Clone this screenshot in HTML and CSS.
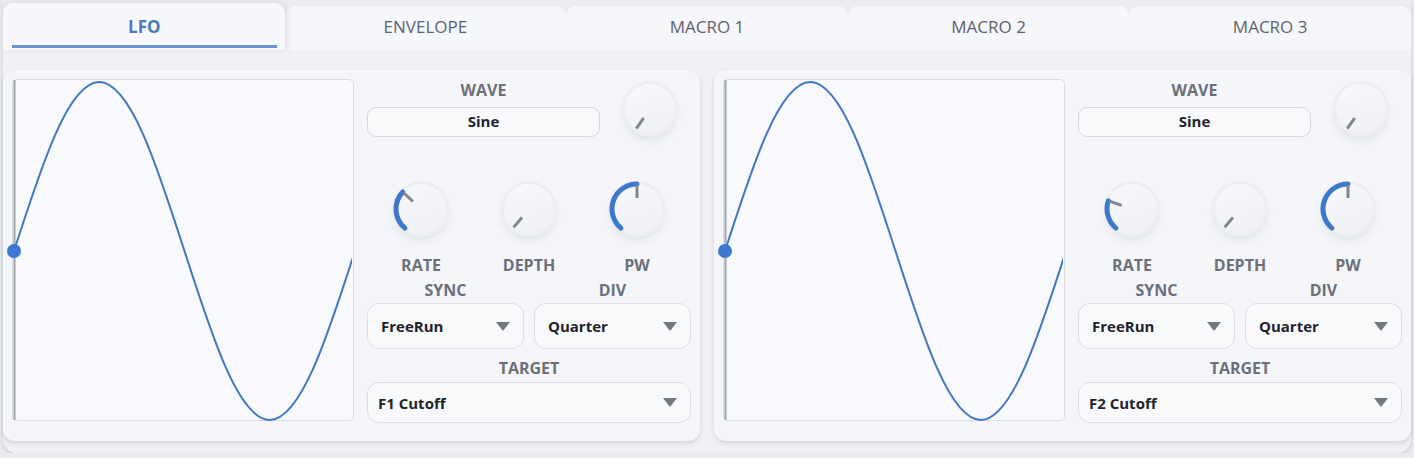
FILE: index.html
```html
<!DOCTYPE html>
<html lang="en">
<head>
    <meta charset="UTF-8">
    <title>Modulation</title>
    <link rel="stylesheet" href="styles.css">
</head>
<body>
    <div class="app">
        <div class="tabs">
            <div class="tab active"><span>LFO</span></div>
            <div class="tab">ENVELOPE</div>
            <div class="tab">MACRO 1</div>
            <div class="tab">MACRO 2</div>
            <div class="tab">MACRO 3</div>
        </div>
        <div class="main">
            <!-- LFO 1 -->
            <div class="panel">
                <div class="scope">
                    <svg viewBox="0 0 340 340" width="340" height="340">
                        <clipPath id="clip1"><rect x="0" y="-4" width="339" height="348"/></clipPath>
                        <line x1="1.5" y1="0" x2="1.5" y2="340" stroke="#a0a4ac" stroke-width="2"/>
                        <path clip-path="url(#clip1)" d="M1 171 C28.8 84.42 55.4 2 86.25 2 C117.1 2 143.7 84.42 171.5 171 C199.3 257.58 225.9 340 256.75 340 C287.6 340 314.2 257.58 342 171" fill="none" stroke="#4176c2" stroke-width="2"/>
                        <circle cx="1" cy="171" r="7" fill="#3c78d2"/>
                    </svg>
                </div>
                <div class="controls">
                    <div class="wave-row">
                        <div class="wave">
                            <div class="label">WAVE</div>
                            <div class="wave-box">Sine</div>
                        </div>
                        <div class="top-knob">
                            <div class="knob">
                                <svg viewBox="0 0 64 64"><path class="ptr" d="M25.69 41.01 L18.23 51.66"/></svg>
                            </div>
                        </div>
                    </div>
                    <div class="knob-row">
                        <div class="knob-cell">
                            <div class="knob">
                                <svg viewBox="0 0 64 64">
                                    <path class="arc" d="M15.93 51.15 A25 25 0 0 1 13.72 14.95"/>
                                    <path class="ptr" d="M23.95 24.5 L14.45 15.63"/>
                                </svg>
                            </div>
                            <div class="label">RATE</div>
                        </div>
                        <div class="knob-cell">
                            <div class="knob">
                                <svg viewBox="0 0 64 64"><path class="ptr" d="M24.93 40.43 L16.57 50.39"/></svg>
                            </div>
                            <div class="label">DEPTH</div>
                        </div>
                        <div class="knob-cell">
                            <div class="knob">
                                <svg viewBox="0 0 64 64">
                                    <path class="arc" d="M15.93 51.15 A25 25 0 0 1 32 7"/>
                                    <path class="ptr" d="M32 21 L32 8"/>
                                </svg>
                            </div>
                            <div class="label">PW</div>
                        </div>
                    </div>
                    <div class="select-row">
                        <div class="field">
                            <div class="label">SYNC</div>
                            <div class="select">FreeRun<span class="arrow"></span></div>
                        </div>
                        <div class="field">
                            <div class="label">DIV</div>
                            <div class="select">Quarter<span class="arrow"></span></div>
                        </div>
                    </div>
                    <div class="field target">
                        <div class="label">TARGET</div>
                        <div class="select">F1 Cutoff<span class="arrow"></span></div>
                    </div>
                </div>
            </div>

            <!-- LFO 2 -->
            <div class="panel">
                <div class="scope">
                    <svg viewBox="0 0 340 340" width="340" height="340">
                        <clipPath id="clip2"><rect x="0" y="-4" width="339" height="348"/></clipPath>
                        <line x1="1.5" y1="0" x2="1.5" y2="340" stroke="#a0a4ac" stroke-width="2"/>
                        <path clip-path="url(#clip2)" d="M1 171 C28.8 84.42 55.4 2 86.25 2 C117.1 2 143.7 84.42 171.5 171 C199.3 257.58 225.9 340 256.75 340 C287.6 340 314.2 257.58 342 171" fill="none" stroke="#4176c2" stroke-width="2"/>
                        <circle cx="1" cy="171" r="7" fill="#3c78d2"/>
                    </svg>
                </div>
                <div class="controls">
                    <div class="wave-row">
                        <div class="wave">
                            <div class="label">WAVE</div>
                            <div class="wave-box">Sine</div>
                        </div>
                        <div class="top-knob">
                            <div class="knob">
                                <svg viewBox="0 0 64 64"><path class="ptr" d="M25.69 41.01 L18.23 51.66"/></svg>
                            </div>
                        </div>
                    </div>
                    <div class="knob-row">
                        <div class="knob-cell">
                            <div class="knob">
                                <svg viewBox="0 0 64 64">
                                    <path class="arc" d="M15.93 51.15 A25 25 0 0 1 8.36 23.86"/>
                                    <path class="ptr" d="M21.6 28.42 L9.31 24.19"/>
                                </svg>
                            </div>
                            <div class="label">RATE</div>
                        </div>
                        <div class="knob-cell">
                            <div class="knob">
                                <svg viewBox="0 0 64 64"><path class="ptr" d="M24.93 40.43 L16.57 50.39"/></svg>
                            </div>
                            <div class="label">DEPTH</div>
                        </div>
                        <div class="knob-cell">
                            <div class="knob">
                                <svg viewBox="0 0 64 64">
                                    <path class="arc" d="M15.93 51.15 A25 25 0 0 1 32 7"/>
                                    <path class="ptr" d="M32 21 L32 8"/>
                                </svg>
                            </div>
                            <div class="label">PW</div>
                        </div>
                    </div>
                    <div class="select-row">
                        <div class="field">
                            <div class="label">SYNC</div>
                            <div class="select">FreeRun<span class="arrow"></span></div>
                        </div>
                        <div class="field">
                            <div class="label">DIV</div>
                            <div class="select">Quarter<span class="arrow"></span></div>
                        </div>
                    </div>
                    <div class="field target">
                        <div class="label">TARGET</div>
                        <div class="select">F2 Cutoff<span class="arrow"></span></div>
                    </div>
                </div>
            </div>
        </div>
    </div>
</body>
</html>
```

FILE: styles.css
```css
body {
    margin: 0;
    background-color: #e9ebee;
    font-family: "Open Sans", "Liberation Sans", sans-serif;
}
.app {
    margin: 0 3px;
    border-radius: 0 0 14px 14px;
    box-shadow: 0 3px 4px rgba(0,0,0,0.12);
}
.tabs {
    display: flex;
    height: 50px;
    padding-top: 6px;
    box-sizing: border-box;
    background-color: #eaecef;
}
.tab {
    flex: 1 1 0;
    min-width: 0;
    display: flex;
    align-items: center;
    justify-content: center;
    padding-bottom: 4px;
    background-color: #f5f7fa;
    border-radius: 10px 10px 0 0;
    font-size: 17px;
    color: #5e626c;
}
.tab.active {
    margin-top: -3px;
    padding-bottom: 0;
    align-items: flex-start;
    background-color: #f6f8fb;
    box-shadow: 3px 0 6px rgba(0,0,0,0.08);
    position: relative;
    z-index: 1;
}
.tab.active span {
    flex: 1;
    margin: 0 8px 0 9px;
    text-align: center;
    line-height: 22px;
    padding: 13px 0 7px;
    border-bottom: 3px solid #6b94cc;
    font-weight: bold;
    color: #4a7abd;
}
.main {
    display: grid;
    grid-template-columns: 1fr 1fr;
    gap: 14px;
    padding: 20px 0 12px;
    background-color: #eff1f4;
    border-radius: 0 0 14px 14px;
}
.panel {
    display: flex;
    gap: 12px;
    padding: 9px 9px 18px;
    background-color: #f4f6f9;
    border-radius: 12px;
    box-shadow: 0 2px 4px rgba(0,0,0,0.13);
}
.scope {
    flex: none;
    width: 340px;
    height: 340px;
    border: 1px solid #d9dce2;
    border-radius: 5px;
    background-color: #f7f9fc;
}
.scope svg {
    display: block;
    overflow: visible;
}
.controls {
    flex: 1;
    padding-left: 1px;
}
.label {
    font-size: 16px;
    line-height: 20px;
    font-weight: bold;
    color: #6c707a;
    text-align: center;
}
.wave-row {
    display: flex;
    align-items: center;
    margin-top: 1px;
}
.wave {
    width: 233px;
}
.wave .label {
    margin-bottom: 7px;
}
.wave-box {
    height: 30px;
    box-sizing: border-box;
    border: 1.5px solid #d5d8de;
    border-radius: 9px;
    background-color: #f8f9fb;
    font-size: 15px;
    line-height: 27px;
    font-weight: bold;
    color: #1f232b;
    text-align: center;
}
.top-knob {
    flex: 1;
    display: flex;
    justify-content: center;
    padding-left: 9px;
}
.knob {
    width: 50px;
    height: 50px;
    border-radius: 50%;
    position: relative;
    background: linear-gradient(160deg, #f8f9fb, #eef0f4);
    box-shadow: 0 0 0 3px #eceef2, 0 5px 10px rgba(40,50,70,0.14);
}
.knob svg {
    position: absolute;
    left: -7px;
    top: -7px;
    width: 64px;
    height: 64px;
    overflow: visible;
}
.arc {
    fill: none;
    stroke: #3d78cc;
    stroke-width: 5;
    stroke-linecap: round;
}
.ptr {
    stroke: #81858e;
    stroke-width: 3;
}
.knob-row {
    display: flex;
    margin-top: 47px;
}
.knob-cell {
    flex: 1;
    display: flex;
    flex-direction: column;
    align-items: center;
}
.knob-cell .label {
    margin-top: 21px;
}
.select-row {
    display: flex;
    gap: 10px;
    margin-top: 5px;
}
.field {
    flex: 1;
}
.field .label {
    margin-bottom: 3px;
}
.select {
    display: flex;
    justify-content: space-between;
    align-items: center;
    height: 46px;
    box-sizing: border-box;
    padding: 0 13px 0 13px;
    border: 1.5px solid #dcdfe5;
    border-radius: 12px;
    background-color: #f8f9fb;
    font-size: 15px;
    font-weight: bold;
    color: #1f232b;
}
.arrow {
    width: 0;
    height: 0;
    border-left: 7px solid transparent;
    border-right: 7px solid transparent;
    border-top: 9px solid #73777f;
}
.target {
    margin-top: 9px;
}
.target .label {
    margin-bottom: 4px;
}
.target .select {
    height: 41px;
    padding-left: 10px;
}
```
